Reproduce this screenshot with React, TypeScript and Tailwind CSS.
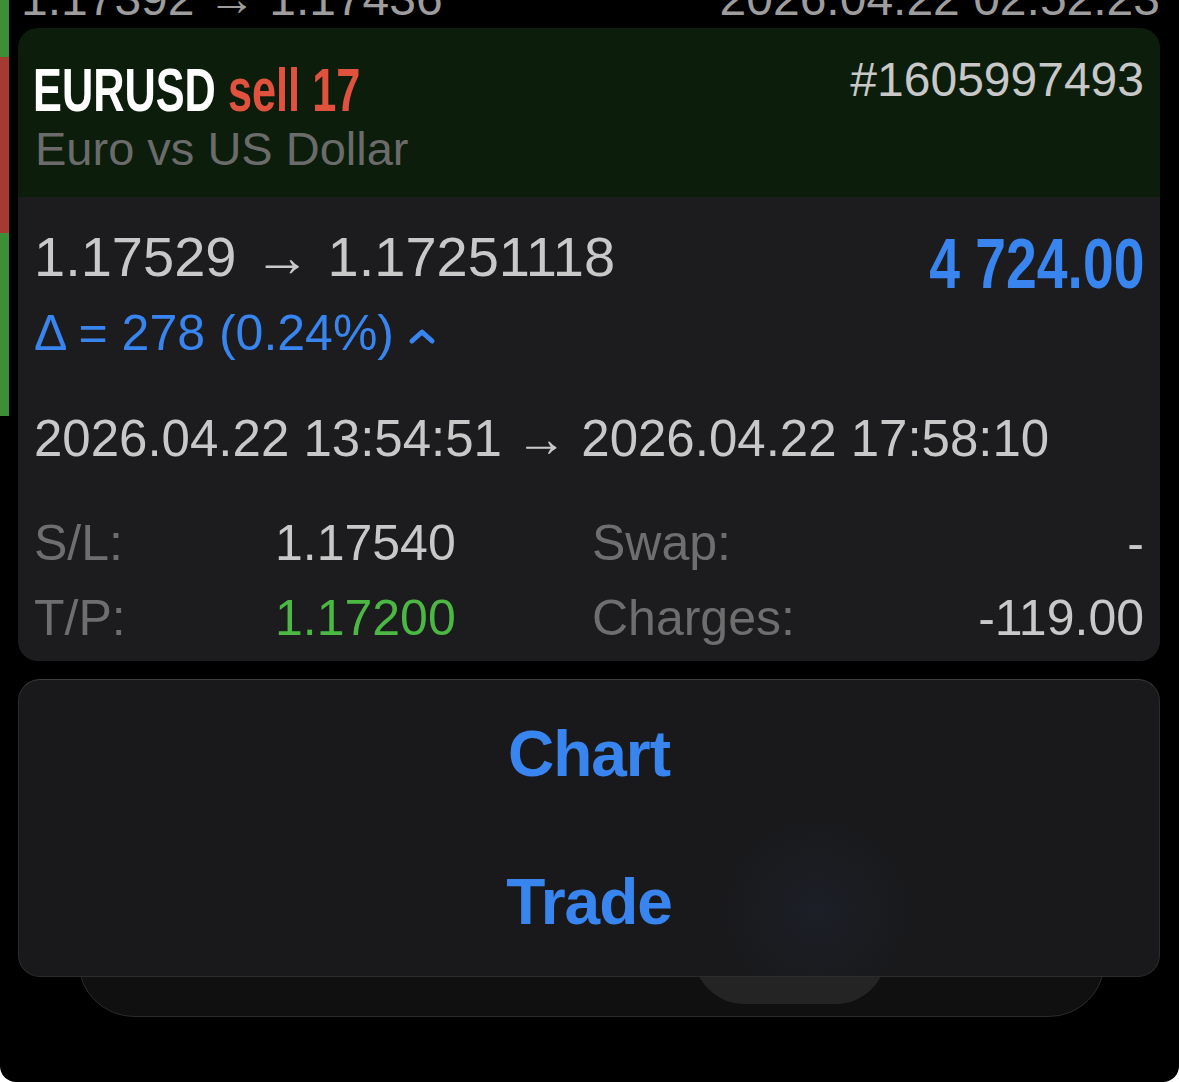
import React from "react";

function ChevronUp() {
  return (
    <svg width="28" height="18" viewBox="0 0 28 18" className="ml-[14px] mt-[6px]">
      <polyline
        points="4,14 14,5 24,14"
        fill="none"
        stroke="#3985f0"
        strokeWidth="5"
        strokeLinecap="round"
        strokeLinejoin="round"
      />
    </svg>
  );
}

export default function App() {
  const rows = [
    { label: "S/L:", value: "1.17540", valueClass: "text-[#c8c8c8]", label2: "Swap:", value2: "-" },
    { label: "T/P:", value: "1.17200", valueClass: "text-[#4bb843]", label2: "Charges:", value2: "-119.00" },
  ];

  return (
    <div className="bg-white">
      <div className="relative h-[1082px] overflow-hidden rounded-b-[16px] bg-black font-['Liberation_Sans',Arial,sans-serif]">
        <div className="flex">
          {/* side stripes of the list rows behind */}
          <div className="flex w-[9px] flex-col">
            <div className="h-[57px] bg-[#3e8e37]" />
            <div className="h-[176px] bg-[#a53a31]" />
            <div className="h-[183px] bg-[#3e8e37]" />
          </div>

          <div className="flex-1 pl-[9px] pr-[19px]">
            {/* row behind, cut off at the top */}
            <div className="flex h-[28px] items-start justify-between pl-[3px] text-[48px] leading-[50px] text-[#9d9d9d] whitespace-nowrap">
              <span className="-mt-[26px] block">1.17392 → 1.17436</span>
              <span className="-mt-[26px] block">2026.04.22 02:52:23</span>
            </div>

            {/* position card */}
            <div className="rounded-[20px]">
              <div className="rounded-t-[20px] bg-[#0c1e0b] pl-[15px] pr-[16px] pt-[32px] pb-[23px]">
                <div className="flex items-start justify-between">
                  <div className="h-[60px] origin-left scale-x-[0.71] whitespace-nowrap text-[61px] font-bold leading-[60px] text-white">
                    EURUSD <span className="text-[#e0523d]">sell 17</span>
                  </div>
                  <div className="text-[48px] leading-[40px] text-[#c8c8c8]">#1605997493</div>
                </div>
                <div className="mt-[4px] pl-[2px] text-[47px] leading-[50px] text-[#6b6b6b]">Euro vs US Dollar</div>
              </div>

              <div className="rounded-b-[20px] bg-[#1c1c1e] px-[16px] pt-[32px] pb-[18px]">
                <div className="flex items-start justify-between">
                  <div className="whitespace-nowrap text-[56px] leading-[56px] text-[#c8c8c8]">
                    1.17529 <span className="mx-[2px]">→</span> 1.17251118
                  </div>
                  <div className="mt-[7px] origin-right scale-x-[0.79] whitespace-nowrap text-[70px] font-bold leading-[56px] text-[#3985f0]">
                    4 724.00
                  </div>
                </div>

                <div className="mt-[16px] flex items-center text-[50px] leading-[50px] text-[#3985f0]">
                  <span>Δ = 278 (0.24%)</span>
                  <ChevronUp />
                </div>

                <div className="mt-[55px] whitespace-nowrap text-[51px] leading-[52px] text-[#c8c8c8]">
                  2026.04.22 13:54:51 → 2026.04.22 17:58:10
                </div>

                <div className="mt-[53px] grid grid-cols-[241px_317px_1fr_auto] gap-y-[25px] text-[50px] leading-[50px]">
                  {rows.map((r) => (
                    <React.Fragment key={r.label}>
                      <span className="text-[#6e6e6e]">{r.label}</span>
                      <span className={r.valueClass}>{r.value}</span>
                      <span className="text-[#6e6e6e]">{r.label2}</span>
                      <span className="text-right text-[#c8c8c8]">{r.value2}</span>
                    </React.Fragment>
                  ))}
                </div>
              </div>
            </div>

            {/* action sheet over the tab bar */}
            <div className="relative mt-[18px]">
              <div className="absolute left-[60px] right-[55px] -bottom-[40px] h-[160px] rounded-[56px] border border-[#2a2a2a] bg-[#101010]">
                <div className="absolute bottom-[12px] left-[615px] h-[120px] w-[192px] rounded-[50px] bg-[#242424]" />
              </div>
              <div className="relative z-10 flex h-[298px] flex-col overflow-hidden rounded-[22px] border border-[#2c2c2e] border-t-[#3c3c3e] bg-[#19191b] bg-[radial-gradient(circle_at_70%_78%,rgba(40,72,120,0.12),transparent_12%)]">
                {["Chart", "Trade"].map((a) => (
                  <button
                    key={a}
                    className="flex h-[149px] items-center justify-center text-[64px] font-bold tracking-[-1px] text-[#3985f0]"
                  >
                    {a}
                  </button>
                ))}
              </div>
            </div>
          </div>
        </div>
      </div>
    </div>
  );
}
